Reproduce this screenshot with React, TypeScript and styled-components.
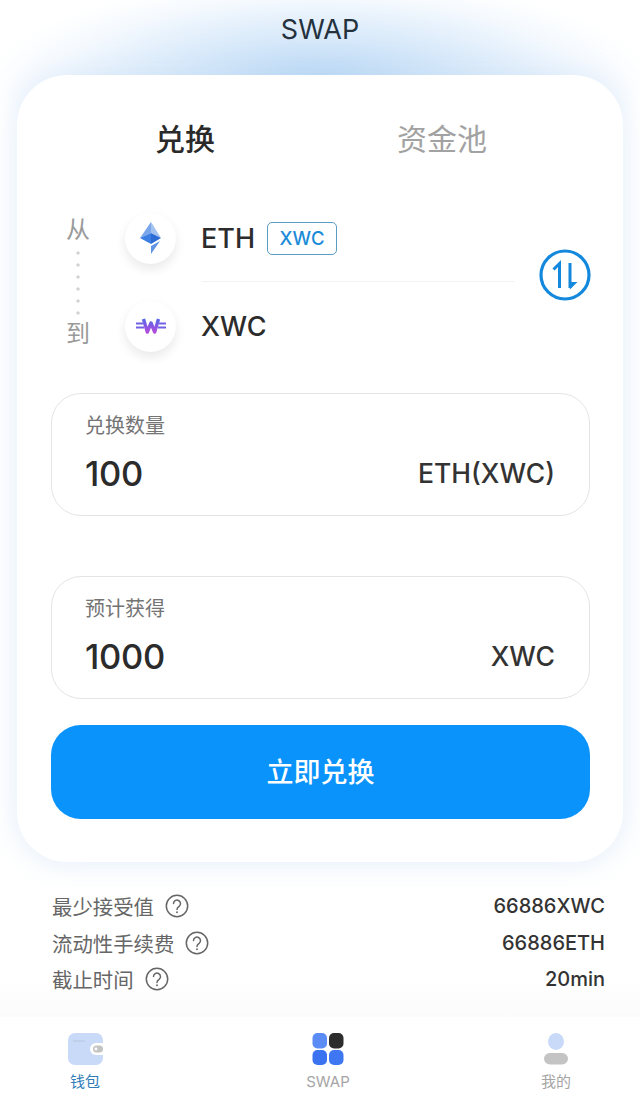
import React from "react";
import styled, { createGlobalStyle } from "styled-components";

const Global = createGlobalStyle`
  html, body { margin: 0; padding: 0; background: #fff; }
  * { box-sizing: border-box; }
  body { font-family: Inter, "Noto Sans CJK SC", sans-serif; }
`;

const Page = styled.div`
  width: 640px;
  height: 1098px;
  display: flex;
  flex-direction: column;
  overflow: hidden;
  background:
    radial-gradient(ellipse 330px 104px at 320px 82px, #b6d6f4 0%, #d2e6f9 35%, #e6f1fc 62%, rgba(244, 249, 254, 0.8) 82%, rgba(255, 255, 255, 0) 100%),
    #fff;
`;
const Header = styled.header`
  height: 75px;
  flex: none;
  padding-top: 12px;
  text-align: center;
  font-size: 27px;
  line-height: 36px;
  color: #24323e;
`;
const Card = styled.main`
  flex: none;
  height: 787px;
  margin: 0 17px;
  padding: 0 33px 0 34px;
  border-radius: 50px;
  background: #fff;
  box-shadow: 0 0 26px 4px rgba(190, 217, 245, 0.36);
  display: flex;
  flex-direction: column;
  position: relative;
  z-index: 1;
`;
const Tabs = styled.nav`
  height: 119px;
  display: grid;
  grid-template-columns: 268px 246px;
  padding-top: 42px;
`;
const Tab = styled.div<{ $active?: boolean }>`
  text-align: center;
  font-size: 30px;
  line-height: 44px;
  font-weight: ${(p) => (p.$active ? 500 : 400)};
  color: ${(p) => (p.$active ? "#2a2a2a" : "#a2a2a2")};
`;
const Pair = styled.section`
  height: 199px;
  display: flex;
  gap: 20px;
  position: relative;
`;
const Rail = styled.div`
  width: 54px;
  flex: none;
  display: flex;
  flex-direction: column;
  align-items: center;
  padding-top: 19px;
  color: #9a9a9a;
  font-size: 24px;
  line-height: 34px;
`;
const Dots = styled.div`
  width: 4px;
  height: 70px;
  background: radial-gradient(circle 1.6px at 2px 6px, #d2d2d2 98%, transparent) 0 0 / 4px 12px repeat-y;
`;
const Tokens = styled.div`
  flex: 1;
  display: flex;
  flex-direction: column;
`;
const TokenRow = styled.div<{ $divided?: boolean }>`
  height: 88px;
  display: flex;
  align-items: center;
  gap: 26px;
  position: relative;
  &::after {
    content: ${(p) => (p.$divided ? '""' : "none")};
    position: absolute;
    left: 77px;
    width: 313px;
    bottom: 0;
    height: 1px;
    background: #f3f3f3;
  }
`;
const Coin = styled.div`
  width: 51px;
  height: 51px;
  flex: none;
  border-radius: 50%;
  background: #fff;
  box-shadow: 0 5px 11px rgba(0, 0, 0, 0.09);
  display: flex;
  align-items: center;
  justify-content: center;
`;
const Symbol = styled.span`
  font-size: 27px;
  font-weight: 450;
  color: #2c2c2c;
  margin-left: -1px;
`;
const Badge = styled.span`
  margin-left: 12px;
  width: 70px;
  height: 33px;
  border: 1px solid #5b9cc4;
  border-radius: 5px;
  color: #1b8bd8;
  font-size: 18.5px;
  font-weight: 450;
  display: inline-flex;
  align-items: center;
  justify-content: center;
`;
const TokenName = styled.div`
  display: flex;
  align-items: center;
`;
const SwapIcon = styled.svg`
  position: absolute;
  right: -1px;
  top: 55px;
  width: 52px;
  height: 52px;
`;
const Field = styled.section`
  height: 123px;
  border: 1px solid #e4e4e4;
  border-radius: 30px;
  padding: 18px 34px 0 33px;
  flex: none;
`;
const FieldLabel = styled.div`
  font-size: 20px;
  line-height: 28px;
  color: #747474;
`;
const FieldRow = styled.div`
  display: flex;
  justify-content: space-between;
  align-items: center;
  margin-top: 7px;
  height: 52px;
`;
const Amount = styled.span`
  font-size: 34.5px;
  font-weight: 450;
  letter-spacing: -0.3px;
  color: #2b2b2b;
`;
const Unit = styled.span`
  font-size: 26.5px;
  font-weight: 450;
  color: #333;
`;
const Spacer = styled.div`
  height: 60px;
  flex: none;
`;
const Action = styled.button`
  height: 94px;
  margin-top: 26px;
  padding: 0 0 3px;
  flex: none;
  border: 0;
  border-radius: 30px;
  background: #0a93fa;
  color: #fff;
  font: 450 27px Inter, "Noto Sans CJK SC", sans-serif;
`;
const Info = styled.section`
  flex: none;
  padding: 26px 35px 0 52px;
  height: 155px;
  background: linear-gradient(rgba(255, 255, 255, 0) 75%, #fbfbfc);
`;
const InfoRow = styled.div`
  height: 36.5px;
  display: flex;
  align-items: center;
  justify-content: space-between;
  font-size: 20.4px;
  color: #666;
`;
const InfoLabel = styled.span`
  display: flex;
  align-items: center;
  gap: 11px;
`;
const InfoValue = styled.span`
  font-size: 20px;
  font-weight: 450;
  color: #333;
`;
const TabBar = styled.footer`
  flex: 1;
  background: #fff;
  display: grid;
  grid-template-columns: 170px 316px 140px;
  padding-top: 16px;
`;
const BarItem = styled.div<{ $active?: boolean }>`
  display: flex;
  flex-direction: column;
  align-items: center;
  gap: 7px;
  font-size: 15px;
  line-height: 20px;
  color: ${(p) => (p.$active ? "#2f7cb8" : "#a5a5a5")};
`;

const Question = () => (
  <svg width="24" height="24" viewBox="0 0 24 24" fill="none" stroke="#666" strokeWidth="1.5" strokeLinecap="round">
    <circle cx="12" cy="12" r="10.7" />
    <path d="M8.5 9.6a3.5 3.5 0 1 1 5.6 2.8c-1.3.9-2.1 1.5-2.1 3" />
    <path d="M12 18.2v.1" strokeWidth="1.9" />
  </svg>
);

const Eth = () => (
  <svg width="23" height="33" viewBox="0 0 23 33">
    <polygon points="12,0 1,16 12,11" fill="#79a6ea" />
    <polygon points="12,0 22,16 12,11" fill="#a3c2f0" />
    <polygon points="1,16 12,11 12,22" fill="#3c7ee2" />
    <polygon points="22,16 12,11 12,22" fill="#2c6cd4" />
    <polygon points="12,32 12,24 21,19" fill="#5f95e4" />
  </svg>
);

const Xwc = () => (
  <svg width="30" height="16" viewBox="0 0 30 16">
    <defs>
      <linearGradient id="xw" x1="0" y1="0" x2="0" y2="1">
        <stop offset="0" stopColor="#5566ea" />
        <stop offset="1" stopColor="#b04cdc" />
      </linearGradient>
    </defs>
    <path d="M7.5 1l3.8 13 3.7-9 3.7 9 3.8-13" fill="none" stroke="url(#xw)" strokeWidth="3.4" strokeLinejoin="round" />
    <path d="M0 5.5h7M0 9.5h8M23 5.5h7M22 9.5h8" stroke="#6f62e4" strokeWidth="2" />
  </svg>
);

const WalletIcon = () => (
  <svg width="35" height="32" viewBox="0 0 35 32">
    <rect x="0" y="0" width="35" height="32" rx="7" fill="#c9daf9" />
    <path d="M5 8h12" stroke="#b6c4dc" strokeWidth="1" />
    <path d="M35 10h-7a6 6 0 0 0 0 12h7z" fill="#fff" />
    <rect x="25" y="12.5" width="10" height="7" rx="3.5" fill="#c3c3c3" />
    <circle cx="28" cy="16" r="1.4" fill="#fff" />
  </svg>
);

const GridIcon = () => (
  <svg width="32" height="32" viewBox="0 0 32 32">
    <rect x="0.5" y="0" width="14.5" height="15.5" rx="5" fill="#5b8cf5" />
    <rect x="17" y="0" width="14.5" height="15.5" rx="5" fill="#2d2d2d" />
    <rect x="0.5" y="17" width="14.5" height="15" rx="5" fill="#3a72f0" />
    <rect x="17" y="17" width="14.5" height="15" rx="5" fill="#3f77f2" />
  </svg>
);

const UserIcon = () => (
  <svg width="26" height="32" viewBox="0 0 26 32">
    <ellipse cx="13" cy="8.5" rx="8" ry="8.5" fill="#c9daf9" />
    <rect x="1" y="20" width="24" height="11.5" rx="5.8" fill="#c4c4c4" />
  </svg>
);

const infoRows = [
  ["最少接受值", "66886XWC"],
  ["流动性手续费", "66886ETH"],
  ["截止时间", "20min"],
];

export default function App() {
  return (
    <Page>
      <Global />
      <Header>SWAP</Header>
      <Card>
        <Tabs>
          <Tab $active>兑换</Tab>
          <Tab>资金池</Tab>
        </Tabs>
        <Pair>
          <Rail>
            <span>从</span>
            <Dots />
            <span>到</span>
          </Rail>
          <Tokens>
            <TokenRow $divided>
              <Coin>
                <Eth />
              </Coin>
              <TokenName>
                <Symbol>ETH</Symbol>
                <Badge>XWC</Badge>
              </TokenName>
            </TokenRow>
            <TokenRow>
              <Coin>
                <Xwc />
              </Coin>
              <Symbol>XWC</Symbol>
            </TokenRow>
          </Tokens>
          <SwapIcon viewBox="0 0 52 52" fill="none" stroke="#1488dc" strokeWidth="3.2">
            <circle cx="26" cy="26" r="24" />
            <path d="M20.5 39V14.5L14.5 20.5" strokeWidth="3" />
            <path d="M31 14v25" strokeWidth="3" />
            <path d="M31.5 39l5.5-5.5h-5.5z" fill="#1488dc" stroke="#1488dc" strokeWidth="1.2" />
          </SwapIcon>
        </Pair>
        <Field>
          <FieldLabel>兑换数量</FieldLabel>
          <FieldRow>
            <Amount>100</Amount>
            <Unit>ETH(XWC)</Unit>
          </FieldRow>
        </Field>
        <Spacer />
        <Field>
          <FieldLabel>预计获得</FieldLabel>
          <FieldRow>
            <Amount>1000</Amount>
            <Unit>XWC</Unit>
          </FieldRow>
        </Field>
        <Action>立即兑换</Action>
      </Card>
      <Info>
        {infoRows.map(([label, value]) => (
          <InfoRow key={label}>
            <InfoLabel>
              {label}
              <Question />
            </InfoLabel>
            <InfoValue>{value}</InfoValue>
          </InfoRow>
        ))}
      </Info>
      <TabBar>
        <BarItem $active>
          <WalletIcon />
          钱包
        </BarItem>
        <BarItem>
          <GridIcon />
          SWAP
        </BarItem>
        <BarItem>
          <UserIcon />
          我的
        </BarItem>
      </TabBar>
    </Page>
  );
}
